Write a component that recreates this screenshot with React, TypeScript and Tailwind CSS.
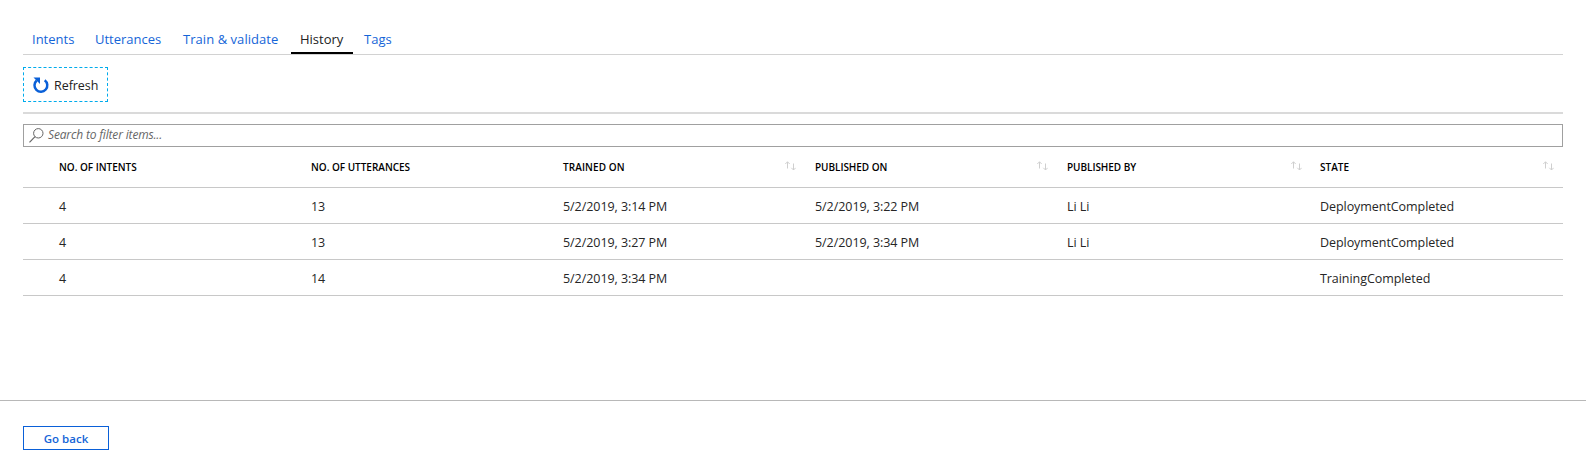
import React from "react";

const tabs = [
  { label: "Intents", box: "w-[63px]", text: "tracking-[0px]" },
  { label: "Utterances", box: "w-[88px]", text: "tracking-[0px]" },
  { label: "Train & validate", box: "w-[117px]", text: "tracking-[0.05px]" },
  { label: "History", box: "w-[62px]", text: "tracking-[0px]", active: true },
  { label: "Tags", box: "w-[53px] ml-[2px]", text: "tracking-[0px]" },
];

const columns = [
  { label: "NO. OF INTENTS", text: "tracking-[-0.02px]" },
  { label: "NO. OF UTTERANCES", text: "tracking-[-0.02px]" },
  { label: "TRAINED ON", text: "tracking-[0.1px]", sort: "mr-[19px]" },
  { label: "PUBLISHED ON", text: "tracking-[-0.05px]", sort: "mr-[19px]" },
  { label: "PUBLISHED BY", text: "tracking-[-0.05px]", sort: "mr-[18px]" },
  { label: "STATE", text: "tracking-[0px]", sort: "mr-[9px]" },
];

const rows = [
  ["4", "13", "5/2/2019, 3:14 PM", "5/2/2019, 3:22 PM", "Li Li", "DeploymentCompleted"],
  ["4", "13", "5/2/2019, 3:27 PM", "5/2/2019, 3:34 PM", "Li Li", "DeploymentCompleted"],
  ["4", "14", "5/2/2019, 3:34 PM", "", "", "TrainingCompleted"],
];

const grid = "grid grid-cols-[252px_252px_252px_252px_253px_1fr] pl-[36px]";

function SortIcon({ className }: { className: string }) {
  return (
    <svg className={`mt-[14px] shrink-0 ${className}`} width="11" height="10" viewBox="0 0 11 10" fill="none" stroke="#cfcfcf">
      <path d="M2.5 7.5V.8M.3 3L2.5.8L4.7 3M8.5 2.5V9M6.3 6.8L8.5 9L10.7 6.8" />
    </svg>
  );
}

export default function App() {
  return (
    <div className="flex h-[472px] w-full flex-col bg-white font-['Open_Sans','Noto_Sans',sans-serif] text-[13px] text-[#262626]">
      <div className="mr-[23px] ml-[23px] flex h-[377px] flex-col">
        <nav className="mt-[26px] flex h-[29px] border-b border-[#d2d2d2]">
          {tabs.map((t) => (
            <button
              key={t.label}
              className={`flex h-[28px] items-center whitespace-nowrap pl-[9px] text-left text-[13px] ${t.box} ${
                t.active ? "border-b-2 border-black pt-[2px] text-[#222222]" : "text-[#1565d8]"
              }`}
            >
              <span className={t.text}>{t.label}</span>
            </button>
          ))}
        </nav>

        <div className="mt-[12px] flex h-[47px] items-start border-b-2 border-[#dadada]">
          <button className="flex h-[35px] w-[85px] items-center border border-dashed border-[#00abec] pl-[8px] text-[12.5px] text-[#222222]">
            <svg className="mr-[4px] shrink-0" width="18" height="18" viewBox="0 0 18 18" fill="none">
              <path d="M12.7 4.2A6.4 6.4 0 1 1 4.7 4.5" stroke="#0a60d8" strokeWidth="2.5" />
              <path d="M1.5 1.5H8V8Z" fill="#0a60d8" />
            </svg>
            <span className="pt-[3px] tracking-[-0.05px]">Refresh</span>
          </button>
        </div>

        <div className="mt-[10px] flex h-[23px] shrink-0 items-center border border-[#a0a0a0] pl-[5px] text-[12px] text-[#666666] italic">
          <svg className="mr-[4px] mb-px shrink-0" width="15" height="15" viewBox="0 0 15 15" fill="none" stroke="#666666">
            <circle cx="9.3" cy="5.3" r="4.7" />
            <path d="M6 8.7L.5 14.3" strokeWidth="1.2" />
          </svg>
          <span className="pb-px tracking-[-0.16px]">Search to filter items...</span>
        </div>

        <div className={`${grid} h-[41px] border-b border-[#c8c8c8]`}>
          {columns.map((c) => (
            <div key={c.label} className="flex justify-between text-[10px] font-semibold text-black">
              <span className={`mt-[13px] leading-[15px] ${c.text}`}>{c.label}</span>
              {c.sort && <SortIcon className={c.sort} />}
            </div>
          ))}
        </div>
        {rows.map((row, i) => (
          <div key={i} className={`${grid} h-[36px] items-center border-b border-[#c8c8c8]`}>
            {row.map((cell, j) => (
              <span key={j} className="pt-[2px] text-[12.5px] leading-[18px] tracking-[-0.06px]">
                {cell}
              </span>
            ))}
          </div>
        ))}
      </div>

      <footer className="mt-[23px] border-t border-[#b8b8b8] px-[23px] pt-[25px]">
        <button className="flex h-[24px] w-[86px] items-center justify-center border border-[#0a60d8] pt-px text-[11.5px] font-semibold text-[#1565d8]">
          Go back
        </button>
      </footer>
    </div>
  );
}
